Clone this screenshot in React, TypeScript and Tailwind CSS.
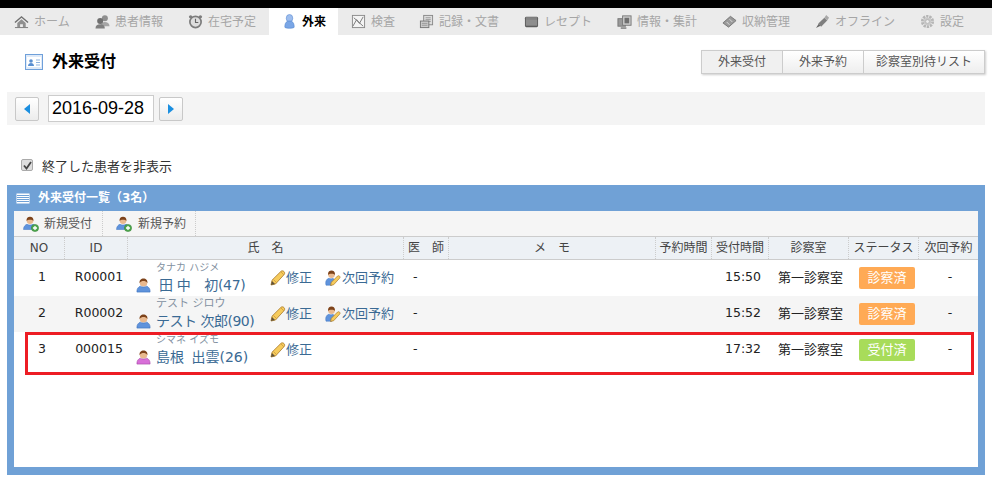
import React from "react";

const FONT = "font-['DejaVu_Sans','Noto_Sans_CJK_JP',sans-serif]";

function Ic({ children, s = 15, className = "" }: { children: React.ReactNode; s?: number; className?: string }) {
  return (
    <svg width={s} height={s} viewBox="0 0 16 16" className={"shrink-0 " + className}>
      {children}
    </svg>
  );
}

const HomeI = () => (
  <Ic>
    <path d="M.5 8.500 8 2l7.500 6.500-1 1L8 4 1.500 9.500z" fill="#6f6f6f" />
    <path d="M3.500 9.500 8 5.500l4.500 4V14h-3v-3h-3v3h-3z" fill="#8f8f8f" />
    <path d="M1 14h14v1H1z" fill="#777" />
  </Ic>
);
const UsersI = () => (
  <Ic>
    <circle cx="10.500" cy="4.500" r="3.200" fill="#8f8f8f" />
    <path d="M6 13c0-3 2-4.500 4.500-4.500S15.500 10 15.500 13z" fill="#a5a5a5" />
    <circle cx="5.500" cy="7.500" r="3.200" fill="#6f6f6f" />
    <path d="M.5 15.500c0-3 2-4.500 5-4.500s5 1.500 5 4.500z" fill="#7f7f7f" />
  </Ic>
);
const ClockI = () => (
  <Ic>
    <circle cx="8" cy="8.500" r="6" fill="#dedede" stroke="#7d7d7d" strokeWidth="1.800" />
    <path d="M8 5v4h3" fill="none" stroke="#666" strokeWidth="1.200" />
    <circle cx="2.800" cy="3" r="1.800" fill="#7d7d7d" />
    <circle cx="13.200" cy="3" r="1.800" fill="#7d7d7d" />
  </Ic>
);
const ChartI = () => (
  <Ic>
    <rect x="1.500" y="1.500" width="13" height="13" fill="#f4f4f4" stroke="#8a8a8a" />
    <path d="M2 13 6 6l3 4 4-7M3 4l10 9" fill="none" stroke="#777" strokeWidth="1" />
  </Ic>
);
const DocsI = () => (
  <Ic>
    <rect x="5" y="1.500" width="9.500" height="10" fill="#ddd" stroke="#888" />
    <path d="M7 4h5.500M7 6h5.500M7 8h5.500" stroke="#999" />
    <rect x="1.500" y="7.500" width="9" height="7" fill="#ccc" stroke="#777" />
    <path d="M3 10h6M3 12h6" stroke="#999" />
  </Ic>
);
const ReceiptI = () => (
  <Ic>
    <rect x="1" y="3" width="14" height="11" rx="1.500" fill="#5c5c5c" />
    <rect x="2" y="5.500" width="12" height="7" fill="#8d8d8d" />
    <rect x="2" y="3.800" width="12" height="1" fill="#aaa" />
  </Ic>
);
const InfoI = () => (
  <Ic>
    <rect x="1" y="5" width="8" height="8" fill="#999" stroke="#777" />
    <rect x="6" y="2" width="9" height="10" fill="#ccc" stroke="#777" />
    <rect x="8" y="4" width="5" height="6" fill="#6f6f6f" />
    <path d="M4 15h6" stroke="#777" strokeWidth="1.500" />
  </Ic>
);
const TicketI = () => (
  <Ic>
    <path d="M1 9.500 9 2.500l6 4.500-8 7z" fill="#9a9a9a" stroke="#777" />
    <path d="M5 8.500l3 3M8 5.500l3 3" stroke="#ddd" />
  </Ic>
);
const PlugI = () => (
  <Ic>
    <path d="M1 15l3-4.500 2 2z" fill="#666" />
    <path d="M3.500 10 10 4l3 3-6.500 6.500z" fill="#7f7f7f" />
    <path d="M10 4l2-3 3 3-2 3z" fill="#a8a8a8" />
  </Ic>
);
const GearI = () => (
  <Ic>
    <circle cx="8" cy="8" r="5.500" fill="none" stroke="#b5b5b5" strokeWidth="3" strokeDasharray="2.400 1" />
    <circle cx="8" cy="8" r="4" fill="#c8c8c8" />
    <circle cx="8" cy="8" r="2" fill="#eee" stroke="#a5a5a5" strokeWidth=".6" />
  </Ic>
);
const OutI = () => (
  <Ic>
    <ellipse cx="8" cy="4.500" rx="3.500" ry="4" fill="#9dbdee" stroke="#5a8ad0" strokeWidth=".6" />
    <path d="M3 14c0-5 2-6.500 5-6.500s5 1.500 5 6.500c0 1.600-10 1.600-10 0z" fill="#7aa6e6" stroke="#4f82cc" strokeWidth=".6" />
  </Ic>
);

function Person({ body, edge }: { body: string; edge: string }) {
  return (
    <Ic s={15}>
      <circle cx="8" cy="5" r="4" fill="#e9b98f" />
      <path d="M3.900 5.500C3.400 2.300 5.500.6 8 .6s4.600 1.700 4.100 4.900C11.300 3.800 9.500 3.300 8 3.300S4.700 3.800 3.900 5.500z" fill="#7d431b" />
      <path d="M1 15c-.3-3.500 1.600-5.800 3.800-6.300 1 1.200 5.400 1.200 6.400 0 2.200.5 4.100 2.800 3.800 6.300z" fill={body} stroke={edge} strokeWidth=".7" />
    </Ic>
  );
}

const PencilI = () => (
  <Ic s={16}>
    <path d="M1 15l1-4.800L11 1.300c.9-.7 2.200-.6 3 .3.800.8.900 2 .2 2.900L5.500 14z" fill="#f6cb5c" stroke="#a8792a" strokeWidth=".8" />
    <path d="M3.500 9.500l3 3M11 2l3 3" stroke="#c9933a" strokeWidth=".7" />
    <path d="M1 15l1-4 3 3z" fill="#5f513a" />
  </Ic>
);
const NextI = () => (
  <Ic s={16}>
    <circle cx="6.500" cy="4.500" r="3.400" fill="#e9b98f" />
    <path d="M3 5C2.800 2 4.500.6 6.500.6S10.200 2 10 5C9 3.300 4 3.300 3 5z" fill="#7d431b" />
    <path d="M.7 13.500c-.2-3 1.300-4.800 3.300-5.300 1 .8 3 .8 4 0l2 2-3 5H1z" fill="#5f93dc" stroke="#3f74c0" strokeWidth=".5" />
    <path d="M5.500 15.500l.8-3.200L12.600 6c.7-.5 1.500-.4 2 .2.500.5.600 1.300.1 1.900L8.700 14.700z" fill="#f6cb5c" stroke="#a8792a" strokeWidth=".7" />
  </Ic>
);
const AddUser = () => (
  <Ic s={16}>
    <circle cx="7" cy="4.500" r="3.400" fill="#e9b98f" />
    <path d="M3.600 5C3.300 2 5 .7 7 .7s3.700 1.300 3.400 4.300C9.500 3.300 4.500 3.300 3.600 5z" fill="#7d431b" />
    <path d="M.5 13.500c0-3 1.800-4.800 3.500-5.200 1 .9 5 .9 6 0 1 .3 2 1 2.500 2.200l-4 3z" fill="#5f93dc" stroke="#3f74c0" strokeWidth=".5" />
    <circle cx="12" cy="12" r="3.600" fill="#4fa84f" stroke="#2f7f2f" strokeWidth=".5" />
    <path d="M12 10v4M10 12h4" stroke="#fff" strokeWidth="1.300" />
  </Ic>
);

const tabs: [React.ReactNode, string, number][] = [
  [<HomeI />, "ホーム", 81],
  [<UsersI />, "患者情報", 93],
  [<ClockI />, "在宅予定", 94],
  [<OutI />, "外来", 69],
  [<ChartI />, "検査", 68],
  [<DocsI />, "記録・文書", 105],
  [<ReceiptI />, "レセプト", 93],
  [<InfoI />, "情報・集計", 105],
  [<TicketI />, "収納管理", 93],
  [<PlugI />, "オフライン", 105],
  [<GearI />, "設定", 60],
];

const cols = "grid grid-cols-[51px_63px_276px_45px_207px_56px_57px_80px_70px_59px]";
const heads = ["NO", "ID", "氏　名", "医　師", "メ　モ", "予約時間", "受付時間", "診察室", "ステータス", "次回予約"];

type Row = {
  no: string; id: string; kana: string; kanaClass: string; name: string; age: string; female?: boolean; next: boolean;
  time: string; status: string; alt: boolean; nameClass: string;
};
const rows: Row[] = [
  { no: "1", id: "R00001", kana: "タナカ ハジメ", kanaClass: "text-[10px]", name: "田 中　初", age: "(47)", next: true, time: "15:50", status: "診察済", alt: false, nameClass: "pl-[3px] tracking-[-0.3px]" },
  { no: "2", id: "R00002", kana: "テスト ジロウ", kanaClass: "text-[11px]", name: "テスト 次郎", age: "(90)", next: true, time: "15:52", status: "診察済", alt: true, nameClass: "tracking-[-0.5px]" },
  { no: "3", id: "000015", kana: "シマネ イズモ", kanaClass: "text-[10px]", name: "島根 出雲", age: "(26)", female: true, next: false, time: "17:32", status: "受付済", alt: false, nameClass: "[word-spacing:3px]" },
];

export default function App() {
  return (
    <div className={"w-[992px] h-[483px] overflow-hidden bg-white text-[13px] text-[#222] " + FONT}>
      <div className="h-2 bg-black" />
      <nav className="h-[27px] bg-[#ebebeb] flex pl-px">
        {tabs.map(([icon, label, w], i) => (
          <div
            key={label}
            style={{ width: w }}
            className={
              "flex items-center pl-[13px] gap-[5px] whitespace-nowrap text-[12px] " +
              (i === 3 ? "bg-white text-black font-bold" : "text-[#a6a6a6]")
            }
          >
            {icon}
            <span>{label}</span>
          </div>
        ))}
      </nav>

      <div className="h-[57px] flex items-start justify-between pl-[25px] pr-[7px]">
        <div className="flex items-center gap-[9px] pt-[17px]">
          <svg width="18" height="16" viewBox="0 0 18 16">
            <rect x=".5" y=".5" width="17" height="15" fill="#dfeaf8" stroke="#6fa0da" />
            <rect x="2" y="3" width="14" height="10" fill="#fff" />
            <circle cx="6" cy="7" r="1.800" fill="#5a8fd0" />
            <path d="M3 12c0-2 1.500-3 3-3s3 1 3 3z" fill="#5a8fd0" />
            <path d="M11 6h4M11 8.500h4M11 11h4" stroke="#8fb3de" />
          </svg>
          <h1 className="text-[16px] font-bold text-black leading-5">外来受付</h1>
        </div>
        <div className="flex mt-[15px] h-6 border border-[#ccc] text-[12px] text-[#555] shadow-[1px_1px_2px_rgba(0,0,0,0.2)]">
          <div className="w-[81px] flex items-center justify-center bg-[#f0f0f0] border-r border-[#ccc]">外来受付</div>
          <div className="w-[81px] flex items-center justify-center bg-gradient-to-b from-white to-[#eee] border-r border-[#ccc]">外来予約</div>
          <div className="w-[120px] flex items-center justify-center bg-gradient-to-b from-white to-[#eee]">診察室別待リスト</div>
        </div>
      </div>

      <div className="mx-[7px] w-[978px] h-[33px] bg-[#f4f4f4] flex items-center pl-2">
        <button className="w-6 h-6 mr-[9px] flex items-center justify-center rounded-[2px] border border-[#c8c8c8] bg-gradient-to-b from-white to-[#ececec]">
          <span className="border-y-[5px] border-y-transparent border-r-[6px] border-r-[#1b8fe0]" />
        </button>
        <div className="w-[106px] h-[27px] mr-[5px] bg-white border border-[#ccc] font-['Liberation_Sans',sans-serif] text-[18px] leading-[25px] text-black pl-[3px]">2016-09-28</div>
        <button className="w-6 h-6 flex items-center justify-center rounded-[2px] border border-[#c8c8c8] bg-gradient-to-b from-white to-[#ececec]">
          <span className="border-y-[5px] border-y-transparent border-l-[6px] border-l-[#1b8fe0]" />
        </button>
      </div>

      <label className="h-[60px] flex items-center pl-[21px] gap-[9px] text-[#333] pt-[23px]">
        <span className="w-3 h-3 -mt-[3px] rounded-[2px] bg-[#ddd] border border-[#aaa] flex items-center justify-center">
          <svg width="9" height="9" viewBox="0 0 9 9"><path d="M1 4.500 3.500 7.500 8 1" fill="none" stroke="#444" strokeWidth="1.800" /></svg>
        </span>
        終了した患者を非表示
      </label>

      <section className="mx-[7px] w-[978px] h-[290px] bg-[#70a1d6] px-[7px] pb-2 flex flex-col">
        <div className="h-[26px] flex items-center gap-2 pl-[2px] text-white font-bold text-[12px] shrink-0">
          <svg width="14" height="11" viewBox="0 0 14 11">
            <rect x=".5" y=".5" width="13" height="10" fill="#fff" />
            <path d="M1 2.500h12M1 4.500h12M1 6.500h12M1 8.500h12" stroke="#70a1d6" />
          </svg>
          外来受付一覧（3名）
        </div>
        <div className="relative flex-1 bg-white flex flex-col">
          <div className="h-[25px] bg-[#f5f5f5] flex text-[12px] text-[#555] shrink-0">
            <div className="w-[89px] flex items-center pl-[9px] gap-[5px] border-r border-dotted border-[#ccc]"><AddUser />新規受付</div>
            <div className="w-[93px] flex items-center pl-[13px] gap-[6px] border-r border-dotted border-[#ccc]"><AddUser />新規予約</div>
          </div>
          <div className={cols + " h-6 bg-[#edf1f5] border-y border-[#ccc] text-[12px] text-[#444] shrink-0"}>
            {heads.map((h) => (
              <div key={h} className="flex items-center justify-center border-r border-dotted border-[#ccc] last:border-r-0 whitespace-nowrap">{h}</div>
            ))}
          </div>
          {rows.map((r) => (
            <div key={r.no} className={cols + " h-9 text-[12.5px] " + (r.alt ? "bg-[#f5f5f5]" : "bg-white")}>
              <div className="flex items-center justify-center pl-[5px] pb-[1px]">{r.no}</div>
              <div className="flex items-center justify-center pl-[5px] pb-[1px]">{r.id}</div>
              <div className="flex pl-[8px] relative">
                <div className="w-[134px] relative">
                  <div className={"absolute left-[20px] top-[2px] leading-3 text-[#8391a1] whitespace-nowrap " + r.kanaClass}>{r.kana}</div>
                  <div className="absolute left-0 top-[15px] flex items-center gap-[5px] whitespace-nowrap text-[#3a6a94] text-[14px] leading-5">
                    {r.female ? <Person body="#d86fd8" edge="#a94aa9" /> : <Person body="#5f93dc" edge="#3f74c0" />}
                    <span className={r.nameClass}>{r.name}{r.age}</span>
                  </div>
                </div>
                <div className="flex items-start pt-[8px] text-[13px] text-[#3a6a94] whitespace-nowrap">
                  <span className="flex items-center w-[55px]"><PencilI />修正</span>
                  {r.next && <span className="flex items-center gap-px"><NextI />次回予約</span>}
                </div>
              </div>
              <div className="flex items-center pl-[9px] pb-[1px]">-</div>
              <div />
              <div />
              <div className="flex items-center justify-center pl-[5px] pb-[1px]">{r.time}</div>
              <div className="flex items-center justify-center pl-[3px] pb-[1px] text-[13px]">第一診察室</div>
              <div className="flex items-center justify-center pl-[6px] pb-[1px]">
                <span className={"w-[56px] h-[22px] rounded-[2px] flex items-center justify-center text-white text-[13px] " + (r.status === "受付済" ? "bg-[#a8dc5a]" : "bg-[#ffaa55]")}>{r.status}</span>
              </div>
              <div className="flex items-center justify-center pl-[3px] pb-[1px]">-</div>
            </div>
          ))}
          <div className="absolute left-[11px] top-[121px] w-[949px] h-[43px] border-[3px] border-[#ed1c24] pointer-events-none" />
        </div>
      </section>
    </div>
  );
}
